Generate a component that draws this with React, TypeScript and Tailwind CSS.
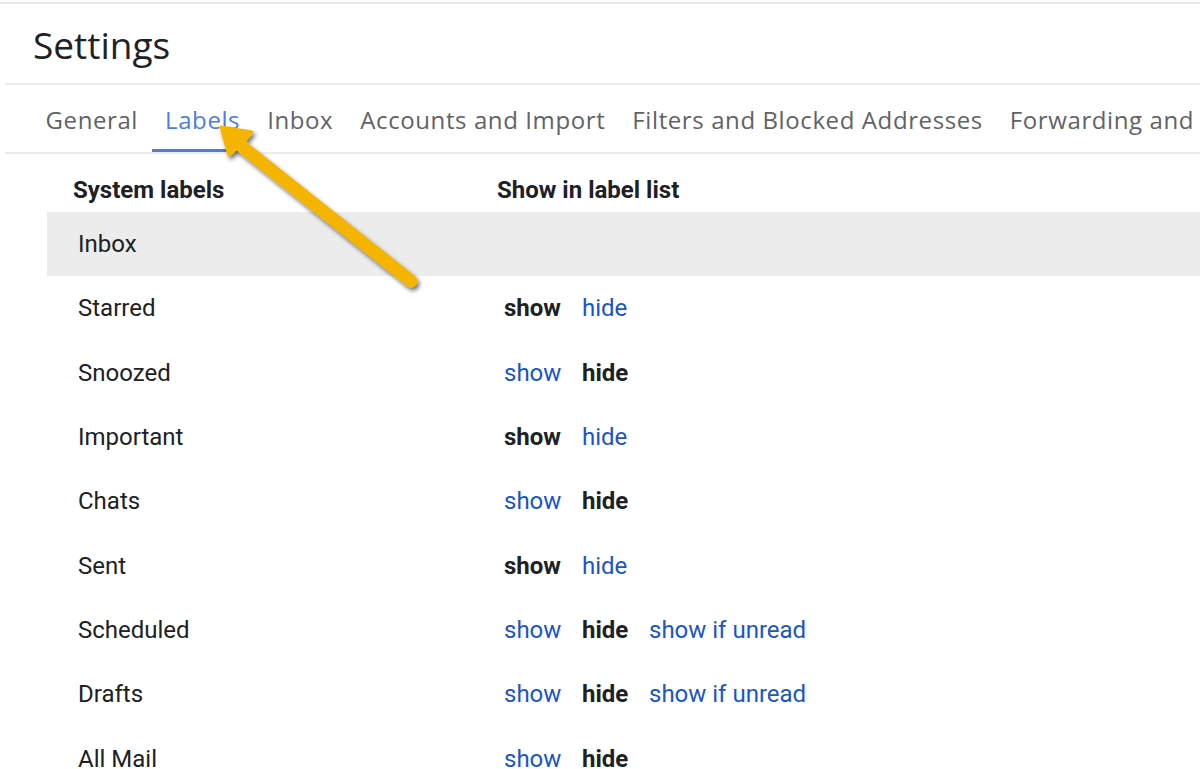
import React from 'react';

type Row = { name: string; opts: string[]; active?: string; highlight?: boolean };

const tabs = ['General', 'Labels', 'Inbox', 'Accounts and Import', 'Filters and Blocked Addresses', 'Forwarding and POP/IMAP'];

const rows: Row[] = [
  { name: 'Inbox', opts: [], highlight: true },
  { name: 'Starred', opts: ['show', 'hide'], active: 'show' },
  { name: 'Snoozed', opts: ['show', 'hide'], active: 'hide' },
  { name: 'Important', opts: ['show', 'hide'], active: 'show' },
  { name: 'Chats', opts: ['show', 'hide'], active: 'hide' },
  { name: 'Sent', opts: ['show', 'hide'], active: 'show' },
  { name: 'Scheduled', opts: ['show', 'hide', 'show if unread'], active: 'hide' },
  { name: 'Drafts', opts: ['show', 'hide', 'show if unread'], active: 'hide' },
  { name: 'All Mail', opts: ['show', 'hide'], active: 'hide' },
];

const optWidth: Record<string, string> = {
  show: 'w-[78px]',
  hide: 'w-[67px]',
  'show if unread': 'w-auto',
};

const Arrow = () => (
  <svg className="absolute left-0 top-0 pointer-events-none" width="1200" height="769">
    <defs>
      <filter id="sh" x="-20%" y="-20%" width="140%" height="140%">
        <feDropShadow dx="2" dy="3" stdDeviation="2" floodColor="#000" floodOpacity="0.55" />
      </filter>
    </defs>
    <g filter="url(#sh)">
      <line x1="240" y1="145" x2="411" y2="281" stroke="#f4b400" strokeWidth="13" strokeLinecap="round" />
      <path d="M221 127 L252 132 L241 145 L229 155 Z" fill="#f4b400" stroke="#f4b400" strokeWidth="3" strokeLinejoin="round" />
    </g>
  </svg>
);

export default function App() {
  return (
    <div className="relative w-[1200px] h-[769px] overflow-hidden bg-white text-[#202124]" style={{ fontFamily: 'Roboto, "Liberation Sans", sans-serif' }}>
      <div className="border-t-2 border-[#e8e8e8] mt-[2px]" />
      <div className="pl-[5px]">
        {/* Title */}
        <div className="h-[81px] pl-[28px] flex items-center border-b-2 border-[#ececec]">
          <h1 className="text-[37px] text-[#202124] pt-[2px]" style={{ fontFamily: '"Open Sans", Roboto, sans-serif' }}>Settings</h1>
        </div>

        {/* Tabs */}
        <div className="h-[69px] pl-[27px] flex items-stretch border-b-2 border-[#ececec] whitespace-nowrap overflow-hidden">
          {tabs.map((t) => (
            <div
              key={t}
              className={`px-[13.5px] pt-[5px] flex items-center text-[24px] tracking-[0.6px] border-b-[3px] ${t === 'Labels' ? 'text-[#4a7fdc] border-[#4a7fdc]' : 'text-[#5f6368] border-transparent'}`}
              style={{ fontFamily: '"Open Sans", Roboto, sans-serif' }}
            >
              {t}
            </div>
          ))}
        </div>

        {/* Table */}
        <div className="pl-[42px]">
          <div className="h-[58px] flex items-center pl-[26px] pt-[13px] text-[24px] font-bold">
            <div className="w-[424px]">System labels</div>
            <div>Show in label list</div>
          </div>
          {rows.map((r) => (
            <div key={r.name} className={`h-[64.3px] flex items-center pl-[31px] text-[24px] ${r.highlight ? 'bg-[#ececec]' : ''}`}>
              <div className="w-[426px]">{r.name}</div>
              <div className="flex">
                {r.opts.map((o) => (
                  <span key={o} className={`${optWidth[o]} ${o === r.active ? 'font-bold text-[#202124]' : 'text-[#1a55c6]'}`}>
                    {o}
                  </span>
                ))}
              </div>
            </div>
          ))}
        </div>
      </div>
      <Arrow />
    </div>
  );
}
